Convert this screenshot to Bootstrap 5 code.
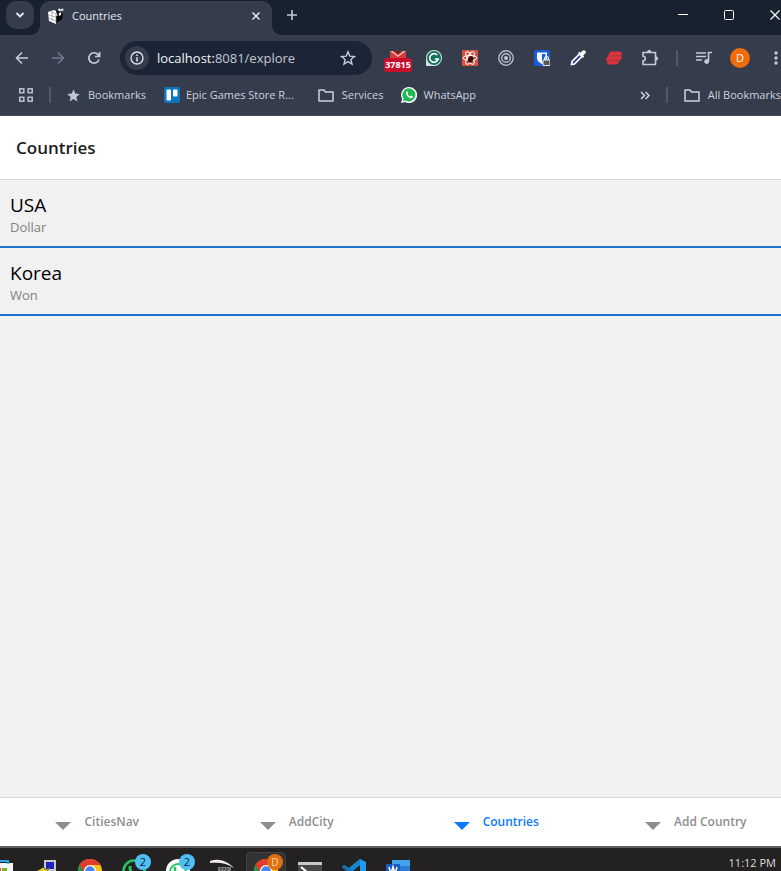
<!DOCTYPE html>
<html lang="en">
<head>
<meta charset="utf-8">
<meta name="viewport" content="width=device-width, initial-scale=1">
<title>Countries</title>
<link href="https://cdn.jsdelivr.net/npm/bootstrap@5.3.0/dist/css/bootstrap.min.css" rel="stylesheet">
<style>
:root { --strip:#182130; --bar:#353c4c; --ico:#c3cadb; }
body { font-family:"Open Sans","Noto Sans",sans-serif; background:#f1f1f1; }
button { border:0; background:none; padding:0; color:inherit; }
svg { display:block; flex:none; }
/* the window runs slightly past the right edge of the screen */
.win { width:calc(100% + 17px); }
.strip { background:var(--strip); height:35px; color:#e6e9f0; }
.drop { width:28px; height:28px; border-radius:10px; background:var(--bar); margin:1px 6px 0; }
.tab { width:232px; height:34px; margin-top:1px; padding:0 10px 4px 8px; border-radius:10px 10px 0 0; background:var(--bar); font-size:11px; position:relative; }
.tab::before,.tab::after { content:""; position:absolute; bottom:0; width:10px; height:10px; }
.tab::before { left:-10px; background:radial-gradient(circle at 0 0,transparent 10px,var(--bar) 10px); }
.tab::after { right:-10px; background:radial-gradient(circle at 100% 0,transparent 10px,var(--bar) 10px); }
.plus { width:40px; height:30px; }
.wbtn { width:46px; height:30px; color:#fff; }
.tools { background:var(--bar); height:46px; padding:0 4px; color:var(--ico); }
.tbtn { width:36px; height:36px; flex:none; position:relative; }
.omni { height:34px; margin:0 8px; border-radius:17px; background:#1c2535; padding:0 16px 0 5px; }
.info { width:24px; height:24px; border-radius:50%; background:var(--bar); }
.url { font-size:13px; color:#c3c9d6; background:none; border:0; outline:0; width:100%; padding-top:1px; }
.url b { color:#f1f3f7; font-weight:400; }
.count { position:absolute; left:4px; bottom:4px; width:28px; height:14px; border-radius:3px; background:#c8102e; color:#fff; font-size:9px; font-weight:700; line-height:14px; }
.sepbox { width:18px; }
.vline { width:2px; height:16px; background:#505869; }
.avatar { width:20px; height:20px; border-radius:50%; background:#ee6c0b; color:#fff; font-size:11px; line-height:20px; }
.marks { background:var(--bar); height:35px; padding:0 17px 6px 19px; color:#ccd1dc; font-size:11px; border-bottom:1px solid #4a4c52; }
.marks button { white-space:nowrap; }
.site { margin-left:18px; gap:6px; }
.head { height:64px; padding:2px 16px 0; border-bottom:1px solid #d8d8d8; }
.head h1 { font-size:17px; font-weight:600; color:#1c1c1e; }
.land { height:68px; padding:13px 10px 0; border-bottom:2px solid #1f75c8; }
.land h2 { font-size:19px; line-height:24px; font-weight:400; color:#000; }
.land p { font-size:13px; line-height:20px; color:#808080; }
.foot { height:49px; border-top:1px solid #d8d8d8; }
.foot a { flex:1 1 0; color:#8e8e8f; font-size:12px; font-weight:600; gap:13px; padding-right:5px; }
.foot a.on { color:#0a7aff; }
.foot svg { margin-top:8px; }
.task { height:25px; background:#242122; border-top:2px solid #5d5f5e; color:#dedede; }
.apps { margin-left:-20px; }
.app { width:44px; height:44px; padding:11px 10px 9px; position:relative; }
.app.on::before { content:""; position:absolute; left:2px; top:4px; width:40px; height:40px; border-radius:4px; background:#353233; border:1px solid #444142; }
.app svg { position:relative; }
.dot { position:absolute; top:6px; right:5px; width:16px; height:16px; border-radius:50%; background:#4fc0f5; color:#10222c; font-size:11px; line-height:16px; text-align:center; }
.dot.org { background:#e0700f; color:#f6d4b4; font-size:10px; }
.clock { font-size:11px; line-height:14px; padding:8px 22px 0 0; }
</style>
<script src="https://cdn.jsdelivr.net/npm/bootstrap@5.3.0/dist/js/bootstrap.bundle.min.js"></script>
</head>
<body class="overflow-hidden">
<div class="win vh-100 d-flex flex-column">
  <header class="flex-shrink-0">
    <div class="strip d-flex align-items-start">
      <button class="drop d-flex align-items-center justify-content-center" aria-label="Search tabs"><svg width="10" height="8" fill="none" stroke="currentColor" stroke-width="1.8"><path d="M1.500 2 5 5.500 8.500 2"/></svg></button>
      <div class="tab d-flex align-items-center">
        <svg width="16" height="16" viewBox="0 0 16 16"><path d="M0 4 6 2l4 2v5l4-3v6l-6 4-7-3z" fill="#fff"/><path d="m8 8 7-3-1 7-6 4z" fill="#080808"/><path d="m8 3 3-1 1 3-3 2z" fill="#111"/><path d="m10 1 2-.5 1 2-2 1zM13 1l2-.5.5 2-2 .5zM11 5l2-.5V7l-2 1z" fill="#fff"/><path d="M0 7l8 2M1 10l7 3M3 4l5 2v9M4 3.500V13" stroke="#888" stroke-width=".6" fill="none"/></svg>
        <span class="ms-2 flex-grow-1">Countries</span>
        <button aria-label="Close tab"><svg width="12" height="12" stroke="currentColor" stroke-width="1.500"><path d="m2.500 2.500 7 7m0-7-7 7"/></svg></button>
      </div>
      <button class="plus d-flex align-items-center justify-content-center" aria-label="New tab"><svg width="12" height="12" stroke="#c3cadb" stroke-width="1.600"><path d="M6 1v10M1 6h10"/></svg></button>
      <div class="d-flex ms-auto">
        <button class="wbtn d-flex align-items-center justify-content-center" aria-label="Minimize"><svg width="10" height="10"><path d="M0 4h10v1H0z" fill="#fff"/></svg></button>
        <button class="wbtn d-flex align-items-center justify-content-center" aria-label="Maximize"><svg width="10" height="10" fill="none" stroke="#fff"><rect x=".5" y=".5" width="9" height="9" rx="1"/></svg></button>
        <button class="wbtn d-flex align-items-center justify-content-center" aria-label="Close"><svg width="10" height="10" stroke="#fff" stroke-width="1.200"><path d="m.5.5 9 9m0-9-9 9"/></svg></button>
      </div>
    </div>

    <div class="tools d-flex align-items-center">
      <button class="tbtn d-flex align-items-center justify-content-center" aria-label="Back"><svg width="14" height="14" fill="none" stroke="currentColor" stroke-width="1.600"><path d="M13 7H2M7 1.500 1.500 7 7 12.500"/></svg></button>
      <button class="tbtn d-flex align-items-center justify-content-center" aria-label="Forward"><svg width="14" height="14" fill="none" stroke="#727a8c" stroke-width="1.600"><path d="M1 7h11M7 1.500 12.500 7 7 12.500"/></svg></button>
      <button class="tbtn d-flex align-items-center justify-content-center" aria-label="Reload"><svg width="14" height="14" fill="none" stroke="currentColor" stroke-width="1.700"><path d="M12 8.500A5.200 5.200 0 1 1 11 3.600L12.500 5M12.600 1v4.500H8"/></svg></button>
      <div class="omni d-flex align-items-center flex-grow-1">
        <button class="info d-flex align-items-center justify-content-center flex-shrink-0" aria-label="Site information"><svg width="14" height="14" fill="none" stroke="#e0e4ec" stroke-width="1.300"><circle cx="7" cy="7" r="6"/><path d="M7 6.200v4.300M7 3.500v1.500" stroke-width="1.500"/></svg></button>
        <div class="url ms-2" role="textbox" aria-label="Address" contenteditable="true" spellcheck="false"><b>localhost:</b>8081/explore</div>
        <button aria-label="Bookmark this page"><svg width="16" height="16" viewBox="0 0 16 16" fill="none" stroke="currentColor" stroke-width="1.400"><path d="m8 1.800 1.800 4.300 4.700.4-3.600 3 1.100 4.600-4-2.500-4 2.500 1.100-4.600-3.600-3 4.700-.4z"/></svg></button>
      </div>
      <button class="tbtn" aria-label="Mail"><svg width="16" height="14" viewBox="0 0 16 14" class="mx-auto"><path d="M0 0h16v14H0z" fill="#d63b35"/><path d="M0 0h16L8 6z" fill="#efb0a8"/><path d="M3 0h10L8 4z" fill="#8d1d1c"/></svg><span class="count">37815</span></button>
      <button class="tbtn d-flex align-items-center justify-content-center" aria-label="Grammar"><svg width="16" height="16" viewBox="0 0 16 16"><path d="M8 0a8 8 0 1 1 0 16H0V8a8 8 0 0 1 8-8z" fill="#cfe6df"/><circle cx="8" cy="8" r="7" fill="#11735c"/><path d="M11.200 5A4.300 4.300 0 1 0 12.200 9H8.800" fill="none" stroke="#fff" stroke-width="1.600"/></svg></button>
      <button class="tbtn d-flex align-items-center justify-content-center" aria-label="React tools"><svg width="16" height="16" viewBox="0 0 16 16"><path d="M0 0h16v16H0z" fill="#d9503f"/><g fill="none" stroke="#fff" stroke-width="1"><ellipse cx="8" cy="8" rx="7" ry="2.600"/><ellipse cx="8" cy="8" rx="7" ry="2.600" transform="rotate(60 8 8)"/><ellipse cx="8" cy="8" rx="7" ry="2.600" transform="rotate(120 8 8)"/></g><ellipse cx="9" cy="9.500" rx="2.500" ry="3.500" fill="#32100d" transform="rotate(35 9 9)"/></svg></button>
      <button class="tbtn d-flex align-items-center justify-content-center" aria-label="Target"><svg width="16" height="16" fill="none" stroke="#b9bdc7" stroke-width="1.400"><circle cx="8" cy="8" r="7.200"/><circle cx="8" cy="8" r="4.300"/><circle cx="8" cy="8" r="2" fill="#c5c8d0" stroke="none"/></svg></button>
      <button class="tbtn d-flex align-items-center justify-content-center" aria-label="Password vault"><svg width="16" height="16" viewBox="0 0 16 16"><rect width="16" height="16" rx="2" fill="#175ddc"/><path d="M3 2.500h10V8c0 3-2 4.500-5 6-3-1.500-5-3-5-6z" fill="#fff"/><path d="M8 4h3.500v4c0 1.500-1.500 3-3.500 4z" fill="#175ddc"/><path d="M9 10h7v5.500H9z" fill="#555" stroke="#e8e8e8"/><path d="M10.500 10V8.500a2 2 0 0 1 4 0V10" fill="none" stroke="#eee" stroke-width="1.200"/></svg></button>
      <button class="tbtn d-flex align-items-center justify-content-center" aria-label="Color picker"><svg width="16" height="16" viewBox="0 0 16 16"><path d="M1.500 14.500 2 11.500 9.500 4 12 6.500 4.500 14z" fill="#34499b" stroke="#fff" stroke-width="1.600"/><path d="m8 3 1.200-1.200 1.300 1L12.500.8A1.900 1.900 0 0 1 15.200 3.500l-2 2 1 1.300L13 8z" fill="#fff"/></svg></button>
      <button class="tbtn d-flex align-items-center justify-content-center" aria-label="Extension"><svg width="16" height="16" viewBox="0 0 16 16"><path d="M6.500 1.500h6.500c3 0 3.500 3 2 4.500 1.500 1.500.5 4-2 4.500.5 2-1 4-3 4H3.500C1 14.500.3 12.500 1.500 11-.5 10 0 7 2.500 6.500 2 4 4 1.500 6.500 1.500z" fill="#dc343b"/><path d="M5 6.200c3 .2 6-.8 9-.4M3 10.600c3 .2 6-.6 9-.2" stroke="#8d3342" stroke-width=".8" fill="none"/></svg></button>
      <button class="tbtn d-flex align-items-center justify-content-center" aria-label="Extensions"><svg width="18" height="18" viewBox="0 0 18 18" fill="none" stroke="currentColor" stroke-width="1.600"><path d="M2 3.500h12.500v12H2v-3.700a2.300 2.300 0 0 0 0-4.600z" stroke-linejoin="round"/><path d="M6.500 3a1.700 1.700 0 0 1 3.400 0zM15 7.800a1.700 1.700 0 0 1 0 3.400z" fill="currentColor" stroke-width="1"/></svg></button>
      <div class="sepbox d-flex justify-content-center"><div class="vline"></div></div>
      <button class="tbtn d-flex align-items-center justify-content-center" aria-label="Media"><svg width="16" height="14" viewBox="0 0 16 14" fill="none" stroke="currentColor" stroke-width="1.600"><path d="M0 2h10M0 5.500h10M0 9h6M12.500 10V1.500H16"/><circle cx="10.700" cy="10.500" r="2" fill="currentColor" stroke-width="1"/></svg></button>
      <button class="tbtn d-flex align-items-center justify-content-center" aria-label="Profile"><span class="avatar">D</span></button>
      <button class="tbtn d-flex align-items-center justify-content-center" aria-label="Menu"><svg width="4" height="14" fill="currentColor"><circle cx="2" cy="2" r="1.700"/><circle cx="2" cy="7" r="1.700"/><circle cx="2" cy="12" r="1.700"/></svg></button>
    </div>

    <nav class="marks d-flex align-items-center" aria-label="Bookmarks">
      <button aria-label="Apps"><svg width="14" height="14" fill="none" stroke="#b9bdc5" stroke-width="1.600"><path d="M.8.8h4v4h-4zM9.200.8h4v4h-4zM.8 9.200h4v4h-4zM9.200 9.200h4v4h-4z"/></svg></button>
      <div class="vline ms-3 me-3"></div>
      <button class="d-flex align-items-center gap-2"><svg width="13" height="13" viewBox="0 0 14 14" fill="#c3c6cc"><path d="m7 .3 1.900 4.600 4.900.4-3.700 3.200 1.100 4.900L7 10.800l-4.200 2.600 1.100-4.900L.2 5.300l4.900-.4z"/></svg>Bookmarks</button>
      <button class="site d-flex align-items-center"><svg width="16" height="16"><rect width="16" height="16" rx="2" fill="#0c76be"/><rect x="2.500" y="2.500" width="4.500" height="11" rx="1" fill="#fff"/><rect x="9" y="2.500" width="4.500" height="7" rx="1" fill="#fff"/></svg>Epic Games Store R...</button>
      <button class="d-flex align-items-center gap-2 ms-4"><svg width="16" height="13" fill="none" stroke="currentColor" stroke-width="1.500"><path d="M1 1h5l1.500 2H15v9H1z" stroke-linejoin="round"/></svg>Services</button>
      <button class="site d-flex align-items-center"><svg width="16" height="16" viewBox="0 0 16 16"><path d="M8 0a8 8 0 1 1-3.800 15L0 16l1.100-4A8 8 0 0 1 8 0z" fill="#fff"/><path d="M8 1.300A6.600 6.600 0 1 1 4.500 13.600L2 14.200l.7-2.400A6.600 6.600 0 0 1 8 1.300z" fill="#20b954"/><path d="M5.500 4.500c1-.8 1.300.5 1.700 1.500l-.7 1c.6 1.200 1.300 1.900 2.600 2.400l1-.9 1.800.9c0 1.700-1.700 2-2.900 1.600C6.500 10.300 4 7 5.500 4.500z" fill="#fff"/></svg>WhatsApp</button>
      <button class="ms-auto" aria-label="More bookmarks"><svg width="10" height="9" fill="none" stroke="currentColor" stroke-width="1.500"><path d="m1 1 3.500 3.500L1 8M5.500 1 9 4.500 5.500 8"/></svg></button>
      <div class="vline ms-3 me-3"></div>
      <button class="d-flex align-items-center gap-2"><svg width="16" height="13" fill="none" stroke="currentColor" stroke-width="1.500"><path d="M1 1h5l1.500 2H15v9H1z" stroke-linejoin="round"/></svg>All Bookmarks</button>
    </nav>
  </header>

  <div class="head bg-white d-flex align-items-center flex-shrink-0"><h1 class="mb-0">Countries</h1></div>
  <main class="flex-grow-1 overflow-hidden">
    <article class="land"><h2 class="mb-0">USA</h2><p class="mb-0">Dollar</p></article>
    <article class="land"><h2 class="mb-0">Korea</h2><p class="mb-0">Won</p></article>
  </main>
  <nav class="foot bg-white d-flex flex-shrink-0" aria-label="Main">
    <a href="#cities" class="d-flex align-items-center justify-content-center text-decoration-none"><svg width="16" height="8" fill="currentColor"><path d="M0 0h16L8 8z"/></svg>CitiesNav</a>
    <a href="#add-city" class="d-flex align-items-center justify-content-center text-decoration-none"><svg width="16" height="8" fill="currentColor"><path d="M0 0h16L8 8z"/></svg>AddCity</a>
    <a href="#countries" class="on d-flex align-items-center justify-content-center text-decoration-none" aria-current="page"><svg width="16" height="8" fill="currentColor"><path d="M0 0h16L8 8z"/></svg>Countries</a>
    <a href="#add-country" class="d-flex align-items-center justify-content-center text-decoration-none"><svg width="16" height="8" fill="currentColor"><path d="M0 0h16L8 8z"/></svg>Add Country</a>
  </nav>

  <footer class="task d-flex align-items-start overflow-hidden flex-shrink-0">
    <div class="apps d-flex">
      <button class="app" aria-label="Store"><svg width="24" height="24"><path d="M0 4h23v18H0z" fill="#f5f5f5"/><path d="M7 5V2h11v3" fill="none" stroke="#27a9e8" stroke-width="2"/><path d="M6 9h5v5H6z" fill="#e9532c"/><path d="M12 9h5v5h-5z" fill="#7ab51d"/></svg></button>
      <button class="app" aria-label="PuTTY"><svg width="24" height="24"><path d="M10 1h12v12H10z" fill="#c9c9c9"/><path d="M12 3h8v7h-8z" fill="#1b20c8"/><path d="M2 12h12v10H2z" fill="#aaa"/><path d="m1 13 9-5 1 3 6-3-7 7-1-3z" fill="#ffe41c" stroke="#222" stroke-width=".6"/></svg></button>
      <button class="app" aria-label="Chrome"><svg width="24" height="24" viewBox="0 0 24 24"><circle cx="12" cy="12" r="12" fill="#fbc116"/><path d="M12 12 7 23A12 12 0 0 1 1.600 6z" fill="#229447"/><path d="M12 6h10.400A12 12 0 0 0 1.600 6L6 13z" fill="#e33b2e"/><circle cx="12" cy="12" r="6" fill="#fff"/><circle cx="12" cy="12" r="4.700" fill="#4285f4"/></svg></button>
      <button class="app" aria-label="WhatsApp"><svg width="24" height="24" fill="none" stroke="#25c463" stroke-width="2.500"><circle cx="12" cy="12" r="10.500"/><path d="M8 7v3c1 4 4 6 8 6" stroke-width="3"/></svg><span class="dot">2</span></button>
      <button class="app" aria-label="WhatsApp Beta"><svg width="24" height="24" fill="none"><circle cx="12" cy="12" r="12" fill="#fff"/><circle cx="12" cy="13" r="8" stroke="#25c463" stroke-width="2"/><path d="M9 8v3c1 4 3 5 6 5" stroke="#25c463" stroke-width="2.500"/></svg><span class="dot">2</span></button>
      <button class="app" aria-label="Tools"><svg width="24" height="24" fill="none"><path d="M0 2c9-3 17 0 24 7-7-5-15-6-24-5z" fill="#eee"/><path d="M8 8h13v8H8z" fill="#777"/><path d="M10 10h9M10 13h9" stroke="#222" stroke-dasharray="2 1"/></svg></button>
      <button class="app on" aria-label="Chrome, profile D"><svg width="24" height="24" viewBox="0 0 24 24"><circle cx="12" cy="12" r="12" fill="#fbc116"/><path d="M12 12 7 23A12 12 0 0 1 1.600 6z" fill="#229447"/><path d="M12 6h10.400A12 12 0 0 0 1.600 6L6 13z" fill="#e33b2e"/><circle cx="12" cy="12" r="6" fill="#fff"/><circle cx="12" cy="12" r="4.700" fill="#4285f4"/></svg><span class="dot org">D</span></button>
      <button class="app" aria-label="Terminal"><svg width="24" height="24"><path d="M0 3h24v18H0z" fill="#484848"/><path d="M0 3h24v3H0z" fill="#c9c9c9"/><path d="m3 8 6 5-6 5" fill="none" stroke="#fff" stroke-width="2"/></svg></button>
      <button class="app" aria-label="VS Code"><svg width="24" height="24"><path d="m18 0 6 3v18l-6 2L0 8l2-2 5 3z" fill="#1f9cf0"/><path d="M18 6v11l-7-5.500z" fill="#242122"/><path d="M0 15 18 0v6L3 18z" fill="#1685cf"/><path d="m0 8 2-2 9 7-3 2z" fill="#1070b3"/></svg></button>
      <button class="app" aria-label="Word"><svg width="24" height="24"><path d="M6 1h18v22H6z" fill="#2b7cd3"/><path d="M6 1h18v6H6z" fill="#41a5ee"/><path d="M0 5h14v13H0z" fill="#185abd"/><path d="m3 8 2 7 2-7 2 7 2-7" fill="none" stroke="#fff" stroke-width="1.600"/></svg></button>
    </div>
    <div class="clock ms-auto">11:12 PM</div>
  </footer>
</div>
</body>
</html>
